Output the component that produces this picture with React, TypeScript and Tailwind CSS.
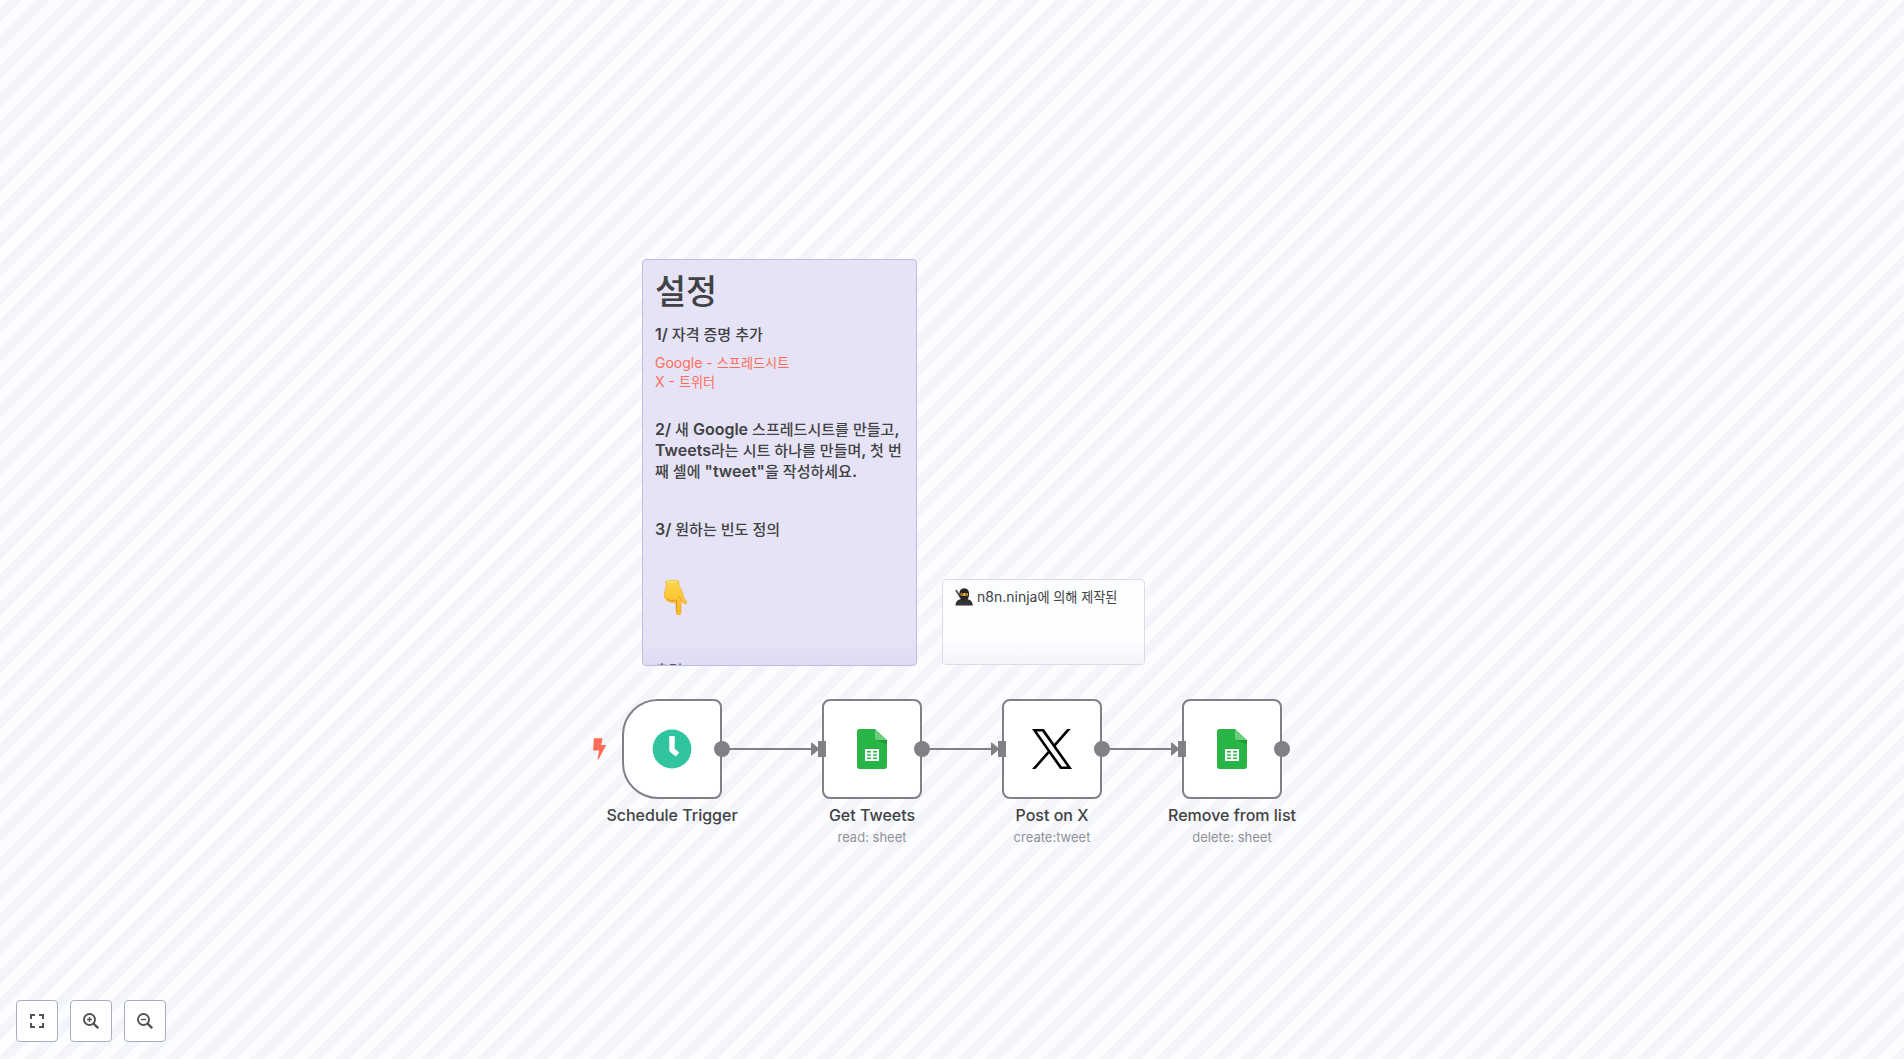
import type { ReactNode } from "react";

type NodeData = {
  title: string;
  subtitle?: string;
  place: string;
  icon: ReactNode;
  trigger?: boolean;
};

function ClockIcon() {
  return (
    <svg viewBox="0 0 40 40" className="size-10" aria-hidden="true">
      <circle cx="20" cy="20" r="19.4" fill="#31c4a0" />
      <path d="M20 9.500v11.600l5.600 4.400" fill="none" stroke="#fff" strokeWidth="5.400" strokeLinejoin="round" />
      <path d="M17.300 7.600q0-.7.7-.7h4q.7 0 .7.700v4h-5.400z" fill="#fff" />
    </svg>
  );
}

function SheetsIcon() {
  return (
    <svg viewBox="0 0 30 40" className="h-10 w-[30px]" aria-hidden="true">
      <path d="M2.7 0H18l12 11.2v26.1A2.7 2.7 0 0 1 27.3 40H2.7A2.7 2.7 0 0 1 0 37.3V2.7A2.7 2.7 0 0 1 2.7 0z" fill="#28b446" />
      <path d="M18 0l12 11.200H20.700A2.700 2.700 0 0 1 18 8.500z" fill="#6ace7c" />
      <path d="M19.200 11h10.800v4.500z" fill="#219b38" />
      <path d="M8 20h14v12H8z" fill="#fff" />
      <path d="M10 22h4v1.400h-4zM16 22h4v1.400h-4zM10 25.200h4v1.600h-4zM16 25.200h4v1.600h-4zM10 28.600h4v1.400h-4zM16 28.600h4v1.400h-4z" fill="#28b446" />
    </svg>
  );
}

function XIcon() {
  return (
    <svg viewBox="1 1 22 22" className="size-10" aria-hidden="true">
      <path d="M14.095 10.316 22.286 1h-1.940L13.230 9.088 7.551 1H1l8.589 12.231L1 23h1.941l7.509-8.543L16.449 23H23zM11.437 13.338l-.872-1.218L3.641 2.432h2.981l5.590 7.821.868 1.219 7.265 10.166h-2.981z" />
    </svg>
  );
}

function BoltIcon() {
  return (
    <svg viewBox="0 0 13 22" className="h-[22px] w-[13px]" aria-hidden="true">
      <path d="M1.400.3h7.600q.7 0 .5.700L8.200 7h4.200q.9 0 .500.800L5.700 21q-.4.700-1 .400-.4-.2-.2-.8l1.700-8H.8q-.7 0-.6-.7L.8.900q.1-.6.6-.6z" fill="#ff6d5a" />
    </svg>
  );
}

function PointDownIcon() {
  return (
    <svg viewBox="0 0 23 35" className="ml-[9px] h-[35px] w-[23px]" role="img" aria-label="👇">
      <defs>
        <linearGradient id="hand" x1="0" y1="0" x2="0" y2="1">
          <stop offset="0" stopColor="#ffd54a" />
          <stop offset="1" stopColor="#fbb81f" />
        </linearGradient>
      </defs>
      <path
        d="M1.500 1.500Q7-.5 14 .8q.9.300.7 1.500-.5 3 1 5 2.300 2.700 3.300 8 .8 3.600 3.500 6.500.8 1.700-1 2-2.300 0-4.500-3.800V32.500q-.1 2.400-2.300 2.400t-2.400-2.400L12 22.500Q8 23 4.500 21.500.3 19.500.3 15.500q0-4 1.700-7.500 1-2.500-.5-6.500z"
        fill="url(#hand)"
        stroke="#eda01c"
        strokeWidth=".6"
      />
      <path d="M3 18.500q1.500 2 4.500 2 3.500.5 4.800-.5M12.500 20.500l.2 11.500M17 19.500q-1-2.500-2.500-3.500" fill="none" stroke="#dd9018" strokeWidth=".9" strokeLinecap="round" />
      <ellipse cx="8" cy="1.800" rx="5.500" ry="1.200" fill="#ffdf6e" />
    </svg>
  );
}

function NinjaIcon() {
  return (
    <svg viewBox="0 0 18 18" className="size-[18px] shrink-0" role="img" aria-label="🥷">
      <path d="M.2 2.400l1.200-.8 5.200 7.400-1.600 1z" fill="#4a4a4c" />
      <path d="M.5 17.500q.2-5 4-6l4.500-2 4.500 2q4 1 4.300 6z" fill="#303133" />
      <path d="M4.300 6.500Q4.100.4 9.200.2q5.200.2 4.900 6.300-.2 5.800-4.800 6.200-4.700-.4-5-6.200z" fill="#262729" />
      <path d="M5.500 5.500q3.700-1.200 7.500 0v1.700q-3.700 1.300-7.500 0z" fill="#f6b62c" />
      <circle cx="7.400" cy="6.300" r=".7" fill="#3a2a12" />
      <circle cx="11.100" cy="6.300" r=".7" fill="#3a2a12" />
      <path d="M4.500 13l4.500 4.500M13.500 13L9 17.500" stroke="#505155" strokeWidth=".6" />
    </svg>
  );
}

function ControlIcon({ children }: { children: ReactNode }) {
  return (
    <svg viewBox="0 0 16 16" className="size-4" fill="none" stroke="currentColor" aria-hidden="true">
      {children}
    </svg>
  );
}

/** Mixed Latin and Hangul text: Hangul is set slightly smaller so both scripts look even. */
function Mixed({ children, strong = false }: { children: string; strong?: boolean }) {
  return (
    <>
      {children.split(/([\uac00-\ud7a3]+(?: [\uac00-\ud7a3]+)*)/).map((part, i) =>
        i % 2 ? (
          <span key={i} lang="ko" className={strong ? "text-[0.94em] font-medium leading-none" : "text-[0.94em] leading-none"}>
            {part}
          </span>
        ) : (
          part
        ),
      )}
    </>
  );
}

function WorkflowNode({ node }: { node: NodeData }) {
  return (
    <article className={`absolute top-[440px] flex w-[100px] flex-col items-center ${node.place}`}>
      <div
        className={`relative flex size-[100px] items-center justify-center border-2 border-[#7f8186] bg-white ${
          node.trigger ? "rounded-l-[36px] rounded-r-lg" : "rounded-lg"
        }`}
      >
        {node.icon}
        {node.trigger ? (
          <span className="absolute -left-[31px] top-[37px]">
            <BoltIcon />
          </span>
        ) : (
          <span className="absolute -left-[6px] top-10 h-4 w-2 bg-[#7f8186]" />
        )}
        <span className="absolute -right-[10px] top-10 size-4 rounded-full bg-[#7f8186]" />
      </div>
      <h2 className="mt-1 whitespace-nowrap text-base font-medium leading-6 text-[#414244]">{node.title}</h2>
      {node.subtitle && <p className="whitespace-nowrap text-[13px] leading-5 text-[#909298]">{node.subtitle}</p>}
    </article>
  );
}

function Connection({ place }: { place: string }) {
  return (
    <div className={`absolute top-[483px] flex h-[14px] items-center ${place}`}>
      <span className="h-0.5 flex-1 bg-[#7f8186]" />
      <svg viewBox="0 0 9 14" className="-ml-px h-[14px] w-[9px] shrink-0" aria-hidden="true">
        <path d="M1 1.500Q1 .200 2.100.8L9.500 7l-7.400 6.200Q1 13.800 1 12.500z" fill="#7f8186" />
      </svg>
    </div>
  );
}

const nodes: NodeData[] = [
  { title: "Schedule Trigger", place: "left-0", icon: <ClockIcon />, trigger: true },
  { title: "Get Tweets", subtitle: "read: sheet", place: "left-[200px]", icon: <SheetsIcon /> },
  { title: "Post on X", subtitle: "create:tweet", place: "left-[380px]", icon: <XIcon /> },
  { title: "Remove from list", subtitle: "delete: sheet", place: "left-[560px]", icon: <SheetsIcon /> },
];

const connections = ["left-[106px] w-[91px]", "left-[306px] w-[71px]", "left-[486px] w-[71px]"];

const controls = [
  {
    label: "Zoom to fit",
    icon: (
      <ControlIcon>
        <path d="M2 6V2h4M10 2h4v4M14 10v4h-4M6 14H2v-4" strokeWidth="2" />
      </ControlIcon>
    ),
  },
  {
    label: "Zoom in",
    icon: (
      <ControlIcon>
        <circle cx="6.5" cy="6.5" r="5.5" strokeWidth="1.900" />
        <path d="M6.500 4v5M4 6.500h5" strokeWidth="1.400" />
        <path d="M10.500 10.500l4.700 4.700" strokeWidth="2.400" />
      </ControlIcon>
    ),
  },
  {
    label: "Zoom out",
    icon: (
      <ControlIcon>
        <circle cx="6.5" cy="6.5" r="5.5" strokeWidth="1.900" />
        <path d="M4 6.500h5" strokeWidth="1.400" />
        <path d="M10.500 10.500l4.700 4.700" strokeWidth="2.400" />
      </ControlIcon>
    ),
  },
];

export default function App() {
  return (
    <main className="relative flex min-h-screen items-center justify-center overflow-hidden bg-[repeating-linear-gradient(135deg,#fcfdff_-4px,#fcfdff_6px,#f4f5fb_6px,#f4f5fb_16px)] font-[Inter,'Noto_Sans_CJK_KR',sans-serif]">
      <div className="relative h-[541px] w-[660px]">
        <section className="absolute left-5 top-0 h-[407px] w-[275px] overflow-hidden rounded border border-[#c1bae6] bg-[#e6e3f6] px-3 text-[#414244]">
          <h1 className="mt-[7px] text-4xl font-semibold leading-[48px]">
            <Mixed strong>설정</Mixed>
          </h1>
          <h5 className="mt-2 text-base font-semibold leading-[22px]">
            <Mixed strong>1/ 자격 증명 추가</Mixed>
          </h5>
          <p className="mt-2 text-sm leading-[19px]">
            <a href="#google" className="text-[#ff6d5a]">
              <Mixed>Google - 스프레드시트</Mixed>
            </a>
            <br />
            <a href="#x" className="text-[#ff6d5a]">
              <Mixed>X - 트위터</Mixed>
            </a>
          </p>
          <h5 className="mt-7 break-all text-base font-semibold leading-[21px]">
            <Mixed strong>2/ 새 Google 스프레드시트를 만들고, Tweets라는 시트 하나를 만들며, 첫 번째 셀에 "tweet"을 작성하세요.</Mixed>
          </h5>
          <h5 className="mt-9 text-base font-semibold leading-[22px]">
            <Mixed strong>3/ 원하는 빈도 정의</Mixed>
          </h5>
          <div className="mt-10">
            <PointDownIcon />
          </div>
          <h5 className="mt-11 text-base font-semibold leading-[22px]">
            <Mixed strong>출력</Mixed>
          </h5>
          <div className="absolute inset-x-0 bottom-0 h-6 bg-linear-to-b from-transparent to-[#c1bae6]/20" />
        </section>

        <section className="absolute left-80 top-80 h-[86px] w-[203px] overflow-hidden rounded border border-[#dbdbe8] bg-[#fcfdff] px-3 pt-[7px] text-[#414244]">
          <p className="flex items-center gap-1 whitespace-nowrap text-sm leading-[19px]">
            <NinjaIcon />
            <span>
              <Mixed>n8n.ninja에 의해 제작된</Mixed>
            </span>
          </p>
          <div className="absolute inset-x-0 bottom-0 h-6 bg-linear-to-b from-transparent to-[#f4f5fb]" />
        </section>

        {connections.map((place) => (
          <Connection key={place} place={place} />
        ))}
        {nodes.map((node) => (
          <WorkflowNode key={node.title} node={node} />
        ))}
      </div>

      <nav className="absolute bottom-[17px] left-4 flex gap-3" aria-label="Canvas controls">
        {controls.map(({ label, icon }) => (
          <button
            key={label}
            type="button"
            aria-label={label}
            className="flex size-[42px] items-center justify-center rounded border border-[#a8adc0] bg-white text-[#525356]"
          >
            {icon}
          </button>
        ))}
      </nav>
    </main>
  );
}
